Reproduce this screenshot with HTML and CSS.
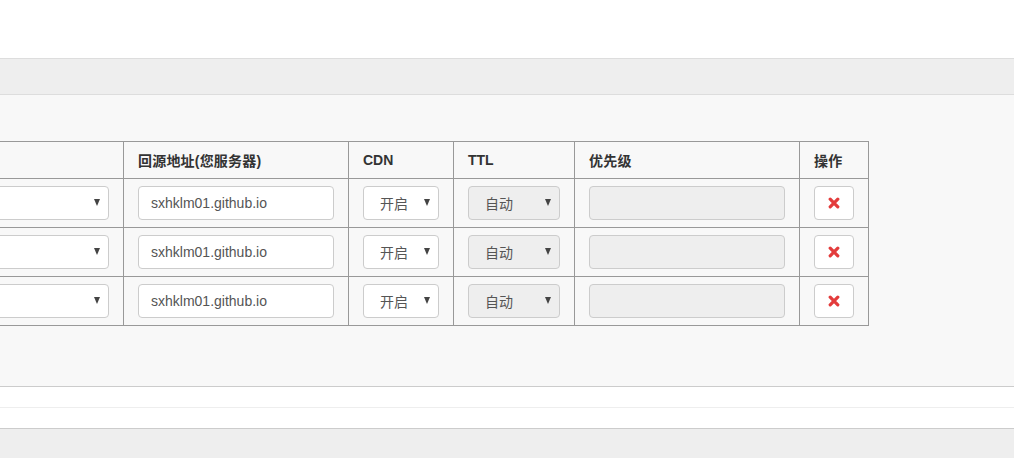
FILE: index.html
```html
<!DOCTYPE html>
<html lang="zh-CN">
<head>
<meta charset="utf-8">
<title>解析记录</title>
<link rel="stylesheet" href="styles.css">
</head>
<body>
<div class="topbar"></div>
<div class="band"></div>
<div class="panel">
  <table class="records">
    <colgroup>
      <col class="w-host"><col class="w-origin"><col class="w-cdn"><col class="w-ttl"><col class="w-pri"><col class="w-op">
    </colgroup>
    <thead>
      <tr>
        <th></th>
        <th><span class="cjk">回源地址(您服务器)</span></th>
        <th>CDN</th>
        <th>TTL</th>
        <th><span class="cjk">优先级</span></th>
        <th><span class="cjk">操作</span></th>
      </tr>
    </thead>
    <tbody>
      <tr>
        <td><div class="ctl select"><span class="val"></span><span class="caret"></span></div></td>
        <td><div class="ctl input">sxhklm01.github.io</div></td>
        <td><div class="ctl select cdn"><span class="val">开启</span><span class="caret"></span></div></td>
        <td><div class="ctl select disabled"><span class="val">自动</span><span class="caret"></span></div></td>
        <td><div class="ctl input disabled"></div></td>
        <td><button class="del" type="button"><svg width="12" height="12" viewBox="0 0 12 12"><path d="M2.2 2.2 L9.8 9.8 M9.8 2.2 L2.2 9.8"/></svg></button></td>
      </tr>
      <tr>
        <td><div class="ctl select"><span class="val"></span><span class="caret"></span></div></td>
        <td><div class="ctl input">sxhklm01.github.io</div></td>
        <td><div class="ctl select cdn"><span class="val">开启</span><span class="caret"></span></div></td>
        <td><div class="ctl select disabled"><span class="val">自动</span><span class="caret"></span></div></td>
        <td><div class="ctl input disabled"></div></td>
        <td><button class="del" type="button"><svg width="12" height="12" viewBox="0 0 12 12"><path d="M2.2 2.2 L9.8 9.8 M9.8 2.2 L2.2 9.8"/></svg></button></td>
      </tr>
      <tr>
        <td><div class="ctl select"><span class="val"></span><span class="caret"></span></div></td>
        <td><div class="ctl input">sxhklm01.github.io</div></td>
        <td><div class="ctl select cdn"><span class="val">开启</span><span class="caret"></span></div></td>
        <td><div class="ctl select disabled"><span class="val">自动</span><span class="caret"></span></div></td>
        <td><div class="ctl input disabled"></div></td>
        <td><button class="del" type="button"><svg width="12" height="12" viewBox="0 0 12 12"><path d="M2.2 2.2 L9.8 9.8 M9.8 2.2 L2.2 9.8"/></svg></button></td>
      </tr>
    </tbody>
  </table>
</div>
<div class="strip"></div>
<div class="strip"></div>
<div class="footer"></div>
</body>
</html>
```

FILE: styles.css
```css
* { box-sizing: border-box; }
html, body {
  margin: 0;
  padding: 0;
  background: #fff;
  overflow: hidden;
}
body {
  font-family: "Liberation Sans", Arial, "Noto Sans CJK SC", sans-serif;
  font-size: 14px;
  color: #333;
  width: 1014px;
  height: 458px;
}
.topbar {
  height: 58px;
  background: #fff;
}
.band {
  height: 37px;
  background: #eee;
  border-top: 1px solid #ddd;
  border-bottom: 1px solid #ddd;
}
.panel {
  background: #f8f8f8;
  padding: 46px 0 60px 0;
  border-bottom: 1px solid #ccc;
  height: 292px;
}
.records {
  border-collapse: collapse;
  table-layout: fixed;
  width: 971px;
  margin-left: -103px;
  border: 1px solid #999;
}
.w-host { width: 226px; }
.w-origin { width: 225px; }
.w-cdn { width: 105px; }
.w-ttl { width: 121px; }
.w-pri { width: 225px; }
.w-op { width: 69px; }
.records th, .records td {
  border: 1px solid #999;
  text-align: left;
  padding: 0 14px;
}
.records th {
  height: 37px;
  font-weight: bold;
  font-size: 14px;
  color: #333;
  vertical-align: middle;
}
.records th .cjk { letter-spacing: 0.2px; }
.records td {
  height: 49px;
  vertical-align: middle;
}
.ctl {
  height: 34px;
  border: 1px solid #ccc;
  border-radius: 4px;
  background: #fff;
  color: #555;
  font-size: 14px;
  display: flex;
  align-items: center;
  padding: 0 12px;
}
.ctl.disabled { background: #eee; }
.select {
  justify-content: space-between;
  padding: 0 8px 0 16px;
}
.select.disabled { padding-left: 16px; }
.caret {
  width: 0;
  height: 0;
  border-left: 3.5px solid transparent;
  border-right: 3.5px solid transparent;
  border-top: 7px solid #444;
  margin-top: -2px;
}
.del {
  width: 40px;
  height: 34px;
  border: 1px solid #ccc;
  border-radius: 4px;
  background: #fff;
  display: flex;
  align-items: center;
  justify-content: center;
  padding: 0;
  margin-left: 0;
}
.del svg path {
  stroke: #e33c3c;
  stroke-width: 3.2;
  stroke-linecap: round;
  fill: none;
}
.strip {
  height: 21px;
  border-bottom: 1px solid #eee;
  background: #fff;
}
.strip + .strip { border-bottom-color: #ccc; }
.footer {
  height: 40px;
  background: #eee;
}
```
